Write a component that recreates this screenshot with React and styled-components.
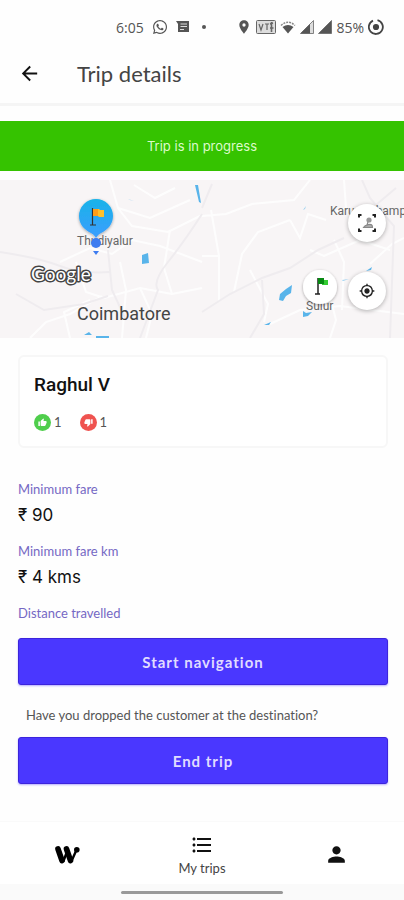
import styled, { createGlobalStyle } from 'styled-components';
import {
  MdArrowBack,
  MdFormatListBulleted,
  MdLocationOn,
  MdMyLocation,
  MdPerson,
  MdThumbDown,
  MdThumbUp,
} from 'react-icons/md';
import { FaWhatsapp } from 'react-icons/fa';

const GlobalStyle = createGlobalStyle`
  * {
    box-sizing: border-box;
  }

  body {
    margin: 0;
    background: #fefefe;
    color: #111;
    font-family: Lato, sans-serif;
    font-variant-ligatures: none;
  }

  button {
    font-family: inherit;
    cursor: pointer;
  }

  svg {
    display: block;
    flex-shrink: 0;
  }
`;

const Screen = styled.div`
  min-height: 100vh;
  display: flex;
  flex-direction: column;
`;

const StatusBar = styled.div`
  height: 44px;
  padding: 10px 20px 0 116px;
  display: flex;
  align-items: center;
  justify-content: space-between;
  color: #555;
  font-family: 'Open Sans', sans-serif;
  font-size: 14px;
`;

const StatusGroup = styled.div`
  display: flex;
  align-items: center;
  gap: ${({ $gap }) => $gap}px;
`;

const Dot = styled.span`
  width: 4px;
  height: 4px;
  margin-left: 4px;
  border-radius: 50%;
  background: #555;
`;

const AppBar = styled.header`
  height: 62px;
  padding: 0 18px;
  display: flex;
  align-items: center;
  gap: 36px;
  border-bottom: 3px solid #f5f5f5;
`;

const IconButton = styled.button`
  display: flex;
  padding: 0;
  border: 0;
  background: none;
  color: #111;
`;

const Title = styled.h1`
  margin: 0;
  font-size: 22px;
  font-weight: 400;
  line-height: 28px;
  color: #444;
`;

const Banner = styled.div`
  height: 50px;
  margin: 15px 0 9px;
  display: flex;
  align-items: center;
  justify-content: center;
  background: #35c300;
  color: #dcfacb;
  font-family: Inter, sans-serif;
  font-size: 13px;
`;

const MapArea = styled.section`
  position: relative;
  height: 158px;
  overflow: hidden;
  background: #f8f5f6;
`;

const MapControls = styled.div`
  position: absolute;
  top: 24px;
  right: 18px;
  display: flex;
  flex-direction: column;
  gap: 30px;
`;

const MapButton = styled.button`
  width: 38px;
  height: 38px;
  padding: 0;
  display: flex;
  align-items: center;
  justify-content: center;
  border: 0;
  border-radius: 50%;
  background: #fff;
  color: #222;
  box-shadow: 0 1px 4px rgba(0, 0, 0, 0.3);
`;

const Content = styled.main`
  padding: 17px 16px 24px 18px;
  display: flex;
  flex-direction: column;
`;

const Card = styled.section`
  height: 93px;
  padding: 16px 14px;
  border: 2px solid #f7f7f7;
  border-radius: 6px;
  background: #fff;
`;

const Name = styled.h2`
  margin: 0 0 16px;
  font-family: Roboto, sans-serif;
  font-size: 19px;
  font-weight: 500;
  line-height: 24px;
`;

const Ratings = styled.div`
  display: flex;
  gap: 18px;
`;

const Rating = styled.span`
  display: flex;
  align-items: center;
  gap: 3px;
  color: #555;
  font-size: 13px;
  line-height: 18px;
`;

const RatingBadge = styled.span`
  width: 17px;
  height: 17px;
  display: flex;
  align-items: center;
  justify-content: center;
  border-radius: 50%;
  background: ${({ $color }) => $color};
  color: #fff;
`;

const Facts = styled.dl`
  margin: 32px 0 16px;
`;

const Label = styled.dt`
  font-size: 13px;
  line-height: 18px;
  color: #7568c4;
`;

const Value = styled.dd`
  margin: 4px 0 14px;
  font-family: Inter, sans-serif;
  font-size: 17px;
  line-height: 26px;
`;

const PrimaryButton = styled.button`
  width: 100%;
  height: 47px;
  border: 1px solid #3c24dc;
  border-radius: 3px;
  background: #4a37ff;
  color: #e0dcff;
  font-size: 15px;
  font-weight: 700;
  letter-spacing: 1px;
  box-shadow: 0 1px 2px rgba(74, 55, 255, 0.4);
`;

const Question = styled.p`
  margin: 21px 8px 13px;
  font-size: 13px;
  line-height: 18px;
  color: #555;
`;

const TabBar = styled.nav`
  height: 63px;
  margin-top: auto;
  display: grid;
  grid-template-columns: repeat(3, 1fr);
  border-top: 1px solid #fafafa;
  background: #fff;
`;

const Tab = styled.button`
  padding: 3px 0 0;
  display: flex;
  flex-direction: column;
  align-items: center;
  justify-content: center;
  gap: 2px;
  border: 0;
  background: none;
  color: #111;
  font-size: 13px;
  line-height: 18px;
`;

const TabLabel = styled.span`
  color: #444;
`;

const GestureBar = styled.div`
  height: 16px;
  display: flex;
  align-items: center;
  justify-content: center;
  background: #fafafa;

  &::after {
    content: '';
    width: 40%;
    height: 3px;
    border-radius: 2px;
    background: #999;
  }
`;

const MessageIcon = () => (
  <svg width="14" height="14" viewBox="0 0 14 14" fill="#555">
    <path d="M0 1h13v11H2V4z" />
    <path d="M4.500 4h6.500M4.500 6.500h6.500M4 9.500h4" stroke="#ddd" strokeWidth="1" />
  </svg>
);

const VolteIcon = () => (
  <svg width="20" height="14" viewBox="0 0 20 14" fill="none" stroke="#666">
    <rect x="0.500" y="0.500" width="19" height="13" rx="1" fill="#ddd" />
    <path d="M3 4l2 6 2-6M9 4h4M11 4v6" strokeWidth="1.200" />
    <path d="M15.500 2v10M14 4l3-1M14 8h3.500" strokeWidth="1.600" />
  </svg>
);

const WifiIcon = () => (
  <svg width="16" height="13" viewBox="0 0 16 13">
    <path d="M1 4.500Q8-2 15 4.500" fill="none" stroke="#888" strokeWidth="1.500" strokeDasharray="2 1" />
    <path d="M2.500 6q5.500-4 11 0L8 12.500z" fill="#555" />
  </svg>
);

const SignalIcon = ({ full }) => (
  <svg width="14" height="14" viewBox="0 0 14 14">
    <path d="M0.500 13.500 13.500.5v13z" fill={full ? '#555' : '#ddd'} stroke="#666" strokeWidth="0.800" />
    {!full && <path d="M0.500 13.500 10 4v9.500z" fill="#555" />}
  </svg>
);

const BatteryIcon = () => (
  <svg width="16" height="16" viewBox="0 0 16 16" fill="none" stroke="#444" strokeWidth="1.800">
    <path d="M9.500 1.200A7 7 0 1 1 5 1.600" />
    <circle cx="8" cy="8" r="2.200" fill="#444" />
  </svg>
);

const FitBoundsIcon = () => (
  <svg width="20" height="20" viewBox="0 0 20 20" fill="none" stroke="#222" strokeWidth="2">
    <path d="M2 4.500V2h2.500M15.500 2H18v2.500M18 15.500V18h-2.500M4.500 18H2v-2.500" />
    <circle cx="12" cy="7" r="2.600" fill="#999" stroke="none" />
    <path d="M6.500 14.500q1-2 5-3t4 3zM11 9l-1 3" stroke="#888" strokeWidth="1.200" fill="#aaa" />
  </svg>
);

const LogoIcon = () => (
  <svg width="26" height="20" viewBox="0 0 26 20" stroke="#000" strokeLinecap="round">
    <path d="M4 4 8 15.500M12.500 4 16.500 15.500" strokeWidth="5.600" />
    <path d="M9.500 16 12.500 8M18 15 22 6" strokeWidth="2.400" />
    <circle cx="22.800" cy="4.800" r="2.800" strokeWidth="0" />
  </svg>
);

const MapDrawing = () => (
  <svg width="100%" height="158" viewBox="0 0 404 158" preserveAspectRatio="xMidYMid slice">
    <defs>
      <linearGradient id="pin" x1="0" y1="0" x2="0" y2="1">
        <stop offset="0" stopColor="#19b3e8" />
        <stop offset="1" stopColor="#3c9dff" />
      </linearGradient>
      <filter id="shadow" x="-30%" y="-30%" width="160%" height="160%">
        <feDropShadow dx="0" dy="1" stdDeviation="1.500" floodOpacity="0.35" />
      </filter>
    </defs>

    {/* roads */}
    <g fill="none" stroke="#fff" strokeWidth="2" opacity="0.8">
      <path d="M110 0 118 28 132 46 168 52 202 35M118 28 150 38 190 20M134 5 155 18 175 8" />
      <path d="M60 82 90 68 112 74 132 60 160 66 202 82M30 158 46 142 70 134 102 116" />
      <path d="M76 82 86 112 104 118 140 108 172 114 202 108M120 82 126 110 122 158" />
      <path d="M140 108 152 134 146 158M170 50 164 88 172 114M90 120 64 132 70 158" />
      <path d="M202 36 226 34 252 24 294 20 310 0M202 76 219 76 219 122M211 30 219 76" />
      <path d="M234 112 242 74 258 52 290 40M290 40 300 58 308 34 326 40M344 0 346 28 330 34" />
      <path d="M250 90 268 124 264 142M310 70 324 76 360 60 390 70M270 144 300 130 340 126 404 134" />
      <path d="M334 60 344 82 342 130M326 100 336 140 330 158M370 84 392 64 404 58" />
    </g>
    <g fill="none" stroke="#efecef" strokeWidth="2">
      <path d="M0 72Q40 78 60 86T110 92M202 34Q184 62 168 82T158 110L140 158" />
      <path d="M16 114 44 130 84 124 108 116M108 70 112 110 126 140" />
      <path d="M202 132 230 114 262 98 290 88 318 70 344 58M202 28 212 4" />
      <path d="M262 100 264 134 250 158M362 0 370 18 394 46 390 158M370 30 396 8" />
    </g>

    {/* water */}
    <g fill="#59b4ea">
      <path d="M195 5h3l3 18-2-1zM142 75l6-2 1 10-7 1zM280 114l6-5 6-4-1 8-5 3-3 5-4-1zM84 155l5-3 3 3zM96 156h13v2H96z" />
      <path d="M303 131l3 2 6-1-4 4-5 1zM264 145l7-3-2 3zM366 91l6-4-1 3zM68 78l3 2zM400 71l4-5z" />
      <path d="M303 30l3-4-1 3zM342 100l7-1-6 2zM128 19l6 2-4-1z" opacity="0.6" />
    </g>

    <g fontFamily="Roboto, sans-serif" fill="#666">
      <text x="77" y="65" fontSize="12">Thudiyalur</text>
      <text x="77" y="140" fontSize="18" fill="#444">Coimbatore</text>
      <text x="330" y="35" fontSize="12">Karumathamp</text>
      <text x="306" y="130" fontSize="12">Sulur</text>
    </g>
    <text
      x="31"
      y="101"
      fontFamily="Lato, sans-serif"
      fontSize="19"
      fontWeight="400"
      fill="#fff"
      stroke="#444"
      strokeWidth="3"
      strokeLinejoin="round"
      paintOrder="stroke"
    >
      Google
    </text>

    {/* pickup pin */}
    <path d="M79 36a17 17 0 1 1 34 0c0 8-5 13-10 16q-5 2-7 6-2-4-7-6c-5-3-10-8-10-16z" fill="url(#pin)" filter="url(#shadow)" />
    <circle cx="96" cy="63" r="5" fill="#3d7cf0" />
    <path d="M93 71h6l-3 4z" fill="#3d7cf0" />
    <path d="M92.500 28v17M90 45h6" stroke="#333" strokeWidth="1.200" />
    <path d="M93 29h6l1 1h4v7h-5l-1-1h-5z" fill="#ffc02a" />
    <path d="M93 29h5v7h-5z" fill="#ff9d18" />

    {/* drop pin */}
    <circle cx="320" cy="107" r="17" fill="#fff" filter="url(#shadow)" />
    <path d="M318 98v16M315 114h5" stroke="#222" strokeWidth="1.500" />
    <path d="M322 100h6v5h-6z" fill="#32cb32" />
    <path d="M318 98h6v6h-6z" fill="#078a12" />
  </svg>
);

const facts = [
  { label: 'Minimum fare', value: '₹ 90' },
  { label: 'Minimum fare km', value: '₹ 4 kms' },
  { label: 'Distance travelled' },
];

const App = () => {
  return (
    <>
      <GlobalStyle />
      <Screen>
        <StatusBar>
          <StatusGroup $gap={8}>
            <span>6:05</span>
            <FaWhatsapp size={16} />
            <MessageIcon />
            <Dot />
          </StatusGroup>
          <StatusGroup $gap={4}>
            <MdLocationOn size={16} />
            <VolteIcon />
            <WifiIcon />
            <SignalIcon />
            <SignalIcon full />
            <span>85%</span>
            <BatteryIcon />
          </StatusGroup>
        </StatusBar>

        <AppBar>
          <IconButton aria-label="Back">
            <MdArrowBack size={23} />
          </IconButton>
          <Title>Trip details</Title>
        </AppBar>

        <Banner>Trip is in progress</Banner>

        <MapArea>
          <MapDrawing />
          <MapControls>
            <MapButton aria-label="Fit route">
              <FitBoundsIcon />
            </MapButton>
            <MapButton aria-label="My location">
              <MdMyLocation size={16} />
            </MapButton>
          </MapControls>
        </MapArea>

        <Content>
          <Card>
            <Name>Raghul V</Name>
            <Ratings>
              <Rating>
                <RatingBadge $color="#4fce4c">
                  <MdThumbUp size={9} />
                </RatingBadge>
                1
              </Rating>
              <Rating>
                <RatingBadge $color="#ef5350">
                  <MdThumbDown size={9} />
                </RatingBadge>
                1
              </Rating>
            </Ratings>
          </Card>

          <Facts>
            {facts.map(({ label, value }) => (
              <div key={label}>
                <Label>{label}</Label>
                {value && <Value>{value}</Value>}
              </div>
            ))}
          </Facts>

          <PrimaryButton>Start navigation</PrimaryButton>
          <Question>Have you dropped the customer at the destination?</Question>
          <PrimaryButton>End trip</PrimaryButton>
        </Content>

        <TabBar>
          <Tab aria-label="Home">
            <LogoIcon />
          </Tab>
          <Tab>
            <MdFormatListBulleted size={24} />
            <TabLabel>My trips</TabLabel>
          </Tab>
          <Tab aria-label="Profile">
            <MdPerson size={25} />
          </Tab>
        </TabBar>
        <GestureBar />
      </Screen>
    </>
  );
};

export default App;
